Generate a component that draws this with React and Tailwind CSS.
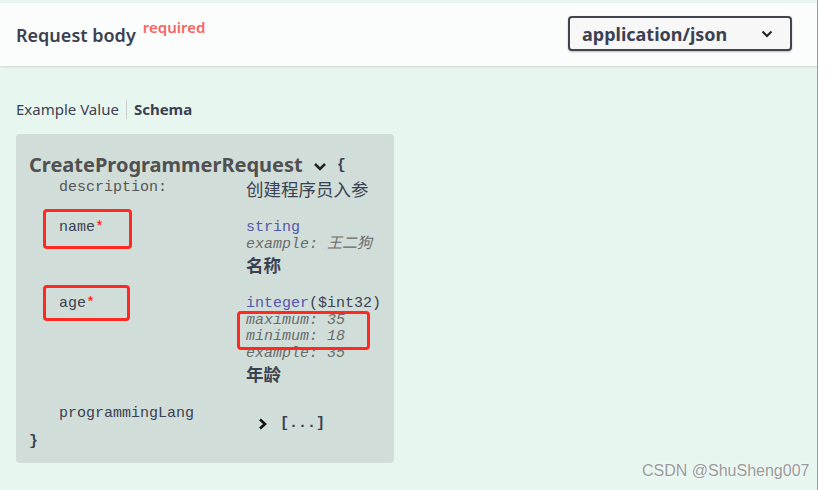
export default function App() {
  const sans = { fontFamily: '"Noto Sans", "Noto Sans CJK SC", sans-serif' };
  const mono = { fontFamily: '"Liberation Mono", "Noto Sans CJK SC", monospace' };
  return (
    <div className="relative w-[826px] h-[490px] bg-white overflow-hidden" style={sans}>
      <div className="w-[818px] h-full bg-[#e8f6f0] border-r border-[#49cc90] pt-[3px]">
        {/* header */}
        <div className="h-[63px] bg-[#fbfdfc] shadow-[0_1px_2px_rgba(0,0,0,0.12)] flex items-center justify-between pl-[16px] pr-[25px]">
          <div className="flex items-start">
            <span className="text-[18px] leading-[24px] font-semibold text-[#3b4151]">Request body</span>
            <span className="text-[15px] leading-[16px] font-semibold text-[#fa6464] ml-[7px] -mt-[4px]">required</span>
          </div>
          <div className="w-[224px] h-[35px] -mt-[2px] border-2 border-[#41444e] rounded-[4px] bg-[#f7f7f7] flex items-center justify-between pl-[12px] pr-[17px] shadow-[0_1px_2px_rgba(0,0,0,0.25)]">
            <span className="text-[18px] leading-[22px] font-bold text-[#3b4151]">application/json</span>
            <svg width="12" height="8" viewBox="0 0 12 8" fill="none">
              <path d="M1.5 1.5 L6 6 L10.5 1.5" stroke="#222" strokeWidth="2" />
            </svg>
          </div>
        </div>

        {/* tabs */}
        <div className="flex items-center pl-[16px] mt-[33px] h-[20px]">
          <span className="text-[15px] leading-[20px] text-[#3b4151]">Example Value</span>
          <span className="w-px h-[19px] bg-[#c8cfcc] mx-[7px]" />
          <span className="text-[15px] leading-[20px] font-bold text-[#3b4151]">Schema</span>
        </div>

        {/* schema box */}
        <div className="ml-[16px] mt-[15px] w-[378px] h-[329px] bg-[#d0ddd8] rounded-[4px] pl-[13px] pt-[19px]">
          <div className="flex items-center h-[24px]">
            <span className="text-[20px] leading-[24px] font-bold text-[#505050]">CreateProgrammerRequest</span>
            <svg className="ml-[10px] mt-[3px]" width="14" height="10" viewBox="0 0 14 10" fill="none">
              <path d="M2 2 L7 7 L12 2" stroke="#222" strokeWidth="2.6" />
            </svg>
            <span className="ml-[10px] mt-[2px] text-[15px] leading-[18px] font-bold text-[#3b4151]" style={mono}>{'{'}</span>
          </div>

          <div className="pl-[30px]">
            {/* description */}
            <div className="flex h-[24px]">
              <div className="w-[187px] pt-[2px] text-[15px] leading-[18px] text-[#555]" style={mono}>description:</div>
              <div className="text-[17.5px] leading-[24px] text-[#3b4151]">创建程序员入参</div>
            </div>

            {/* name */}
            <div className="flex mt-[17px]">
              <div className="w-[187px] pt-[2px] text-[15px] leading-[16.5px] text-[#3b4151]" style={mono}>
                name<span className="text-[#f00]">*</span>
              </div>
              <div className="pt-[2px]">
                <div className="text-[15px] leading-[16.5px] text-[#55a]" style={mono}>string</div>
                <div className="text-[15px] leading-[16.5px] italic text-[#6b6b6b]" style={mono}>example: 王二狗</div>
                <div className="text-[17.5px] leading-[24px] font-bold text-[#3b4151]">名称</div>
              </div>
            </div>

            {/* age */}
            <div className="flex mt-[17px]">
              <div className="w-[187px] pt-[2px] text-[15px] leading-[16.5px] text-[#3b4151]" style={mono}>
                age<span className="text-[#f00]">*</span>
              </div>
              <div className="pt-[2px]">
                <div className="text-[15px] leading-[16.5px] text-[#55a]" style={mono}>
                  integer<span className="text-[#3b4151]">($int32)</span>
                </div>
                <div className="text-[15px] leading-[16.5px] italic text-[#6b6b6b]" style={mono}>maximum: 35</div>
                <div className="text-[15px] leading-[16.5px] italic text-[#6b6b6b]" style={mono}>minimum: 18</div>
                <div className="text-[15px] leading-[16.5px] italic text-[#6b6b6b]" style={mono}>example: 35</div>
                <div className="text-[17.5px] leading-[24px] font-bold text-[#3b4151]">年龄</div>
              </div>
            </div>

            {/* programmingLang */}
            <div className="flex mt-[19px] h-[28px]">
              <div className="w-[199px] text-[15px] leading-[18px] text-[#3b4151]" style={mono}>programmingLang</div>
              <div className="flex items-center mt-[10px] h-[18px]">
                <svg width="10" height="12" viewBox="0 0 10 12" fill="none">
                  <path d="M2 1.5 L7 6 L2 10.5" stroke="#111" strokeWidth="2.6" />
                </svg>
                <span className="ml-[12px] text-[15px] leading-[18px] font-bold text-[#3b4151]" style={mono}>[...]</span>
              </div>
            </div>
          </div>
          <div className="text-[15px] leading-[18px] font-bold text-[#3b4151]" style={mono}>{'}'}</div>
        </div>
      </div>

      {/* annotations */}
      <div className="absolute left-[43px] top-[209px] w-[89px] h-[40px] border-[3px] border-[#ff2a1f] rounded-[4px]" />
      <div className="absolute left-[43px] top-[285px] w-[87px] h-[36px] border-[3px] border-[#ff2a1f] rounded-[4px]" />
      <div className="absolute left-[237px] top-[311px] w-[133px] h-[39px] border-[3px] border-[#ff2a1f] rounded-[4px]" />

      {/* watermark */}
      <div
        className="absolute left-[642px] top-[460px] text-[16px] leading-[22px] text-[#9a9a9a] [text-shadow:0_0_2px_#fff]"
        style={{ fontFamily: '"Liberation Sans", sans-serif' }}
      >
        CSDN @ShuSheng007
      </div>
    </div>
  );
}
